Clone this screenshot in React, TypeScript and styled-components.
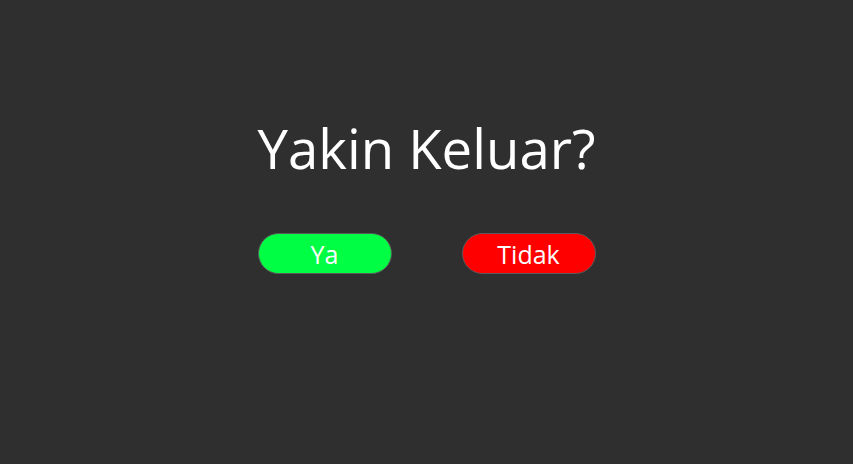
import React from "react";
import styled, { createGlobalStyle } from "styled-components";

const Global = createGlobalStyle`
  html, body { margin: 0; padding: 0; background: #2f2f2f; }
  body { font-family: "Open Sans", "Noto Sans", sans-serif; }
`;

const Page = styled.div`
  width: 853px;
  height: 464px;
  background: #2f2f2f;
  display: flex;
  flex-direction: column;
  align-items: center;
  padding-top: 110px;
  box-sizing: border-box;
`;

const Title = styled.h1`
  margin: 0;
  color: #ffffff;
  font-weight: 400;
  font-size: 54.5px;
  line-height: 76px;
  letter-spacing: 0;
`;

const Row = styled.div`
  display: flex;
  gap: 70px;
  margin-top: 47px;
`;

const Button = styled.button<{ $bg: string }>`
  width: 134px;
  height: 41px;
  border-radius: 21px;
  border: 1px solid #5a5a5a;
  background: ${(p) => p.$bg};
  color: #ffffff;
  font-family: "Open Sans", "Noto Sans", sans-serif;
  font-size: 25px;
  line-height: 1;
  padding: 1px 0 0;
  display: flex;
  align-items: center;
  justify-content: center;
  cursor: pointer;
`;

export default function App() {
  return (
    <>
      <Global />
      <Page>
        <Title>Yakin Keluar?</Title>
        <Row>
          <Button $bg="#00ff44">Ya</Button>
          <Button $bg="#ff0000">Tidak</Button>
        </Row>
      </Page>
    </>
  );
}
